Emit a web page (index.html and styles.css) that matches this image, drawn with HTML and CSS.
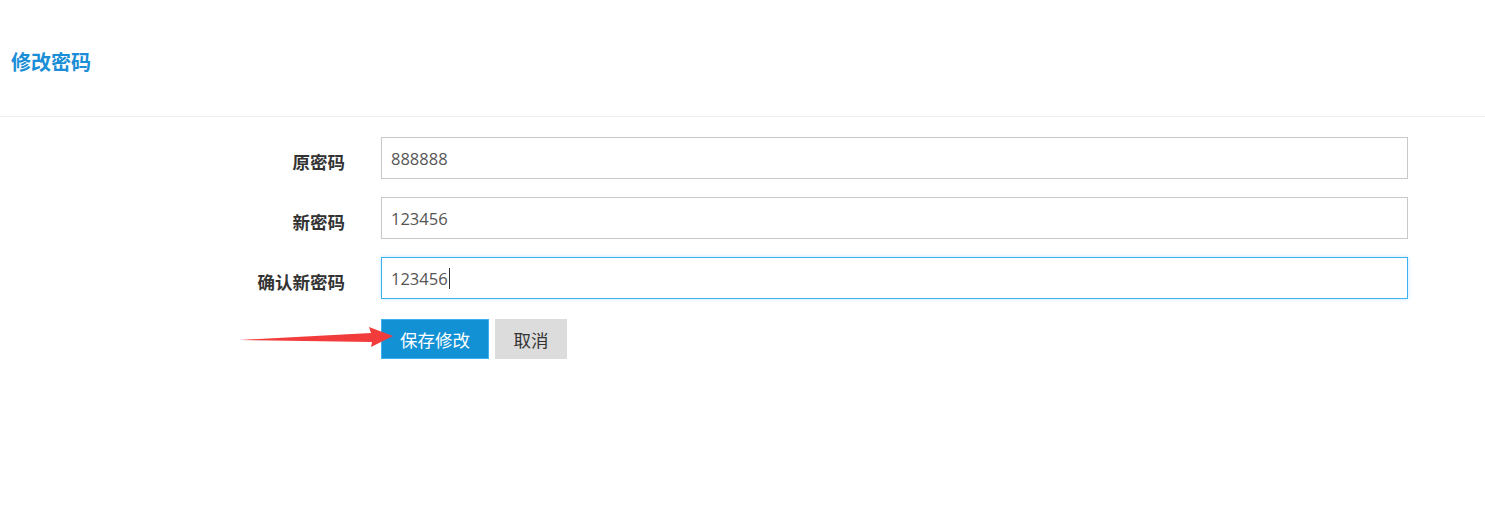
FILE: index.html
```html
<!DOCTYPE html>
<html lang="zh">
<head>
  <meta charset="utf-8" />
  <title>修改密码</title>
  <link rel="stylesheet" href="styles.css">
</head>
<body>
  <div class="page-head">
    <h2>修改密码</h2>
  </div>
  <form class="pwd-form">
    <label class="field-label">原密码</label>
    <input class="field-input" type="text" value="888888">
    <label class="field-label">新密码</label>
    <input class="field-input" type="text" value="123456">
    <label class="field-label">确认新密码</label>
    <div class="input-wrap">
      <input class="field-input focused" type="text" value="123456">
      <span class="caret"></span>
    </div>
    <div></div>
    <div class="actions">
      <button type="button" class="btn btn-primary">保存修改</button>
      <button type="button" class="btn btn-cancel">取消</button>
    </div>
  </form>

  <!-- 标注箭头 -->
  <svg class="arrow" width="170" height="30" viewBox="0 0 170 30">
    <polygon points="0,22 132,15 130,9 154,18 132,29 133,24" fill="#f23c3c" />
  </svg>
</body>
</html>
```

FILE: styles.css
```css
body {
  margin: 0;
  font-family: "Open Sans", "Noto Sans CJK SC", sans-serif;
  background: #fff;
  color: #333;
  position: relative;
  height: 528px;
}
.page-head {
  height: 117px;
  border-bottom: 1px solid #eceff1;
  display: flex;
  align-items: center;
  padding-left: 11px;
  padding-top: 6px;
  box-sizing: border-box;
}
.page-head h2 {
  margin: 0;
  font-size: 20px;
  font-weight: bold;
  color: #1a8ed6;
  font-family: "Noto Sans CJK SC", sans-serif;
}
.pwd-form {
  display: grid;
  grid-template-columns: 345px 1fr;
  column-gap: 36px;
  row-gap: 18px;
  padding: 20px 77px 0 0;
}
.field-label {
  text-align: right;
  font-size: 17.5px;
  font-weight: bold;
  color: #333;
  padding-top: 13px;
  line-height: 24px;
  font-family: "Noto Sans CJK SC", sans-serif;
}
.field-input {
  height: 42px;
  box-sizing: border-box;
  width: 100%;
  border: 1px solid #c9c9c9;
  padding: 0 9px;
  font-size: 16.5px;
  color: #555;
  font-family: "Open Sans", "Noto Sans CJK SC", sans-serif;
  outline: none;
}
.input-wrap {
  position: relative;
}
.field-input.focused {
  border-color: #3cb1f2;
  box-shadow: 0 0 4px rgba(60, 177, 242, 0.3);
}
.caret {
  position: absolute;
  left: 68px;
  top: 11px;
  width: 1px;
  height: 21px;
  background: #333;
}
.actions {
  display: flex;
  gap: 6px;
  margin-top: 2px;
}
.btn {
  height: 40px;
  border: none;
  font-size: 17.5px;
  font-family: "Noto Sans CJK SC", sans-serif;
  cursor: pointer;
}
.btn-primary {
  width: 108px;
  background: #1291d5;
  color: #fff;
  border: 1px solid #3cb1f2;
}
.btn-cancel {
  width: 72px;
  background: #dcdcdc;
  color: #333;
}
.arrow {
  position: absolute;
  left: 239px;
  top: 318px;
}
```
